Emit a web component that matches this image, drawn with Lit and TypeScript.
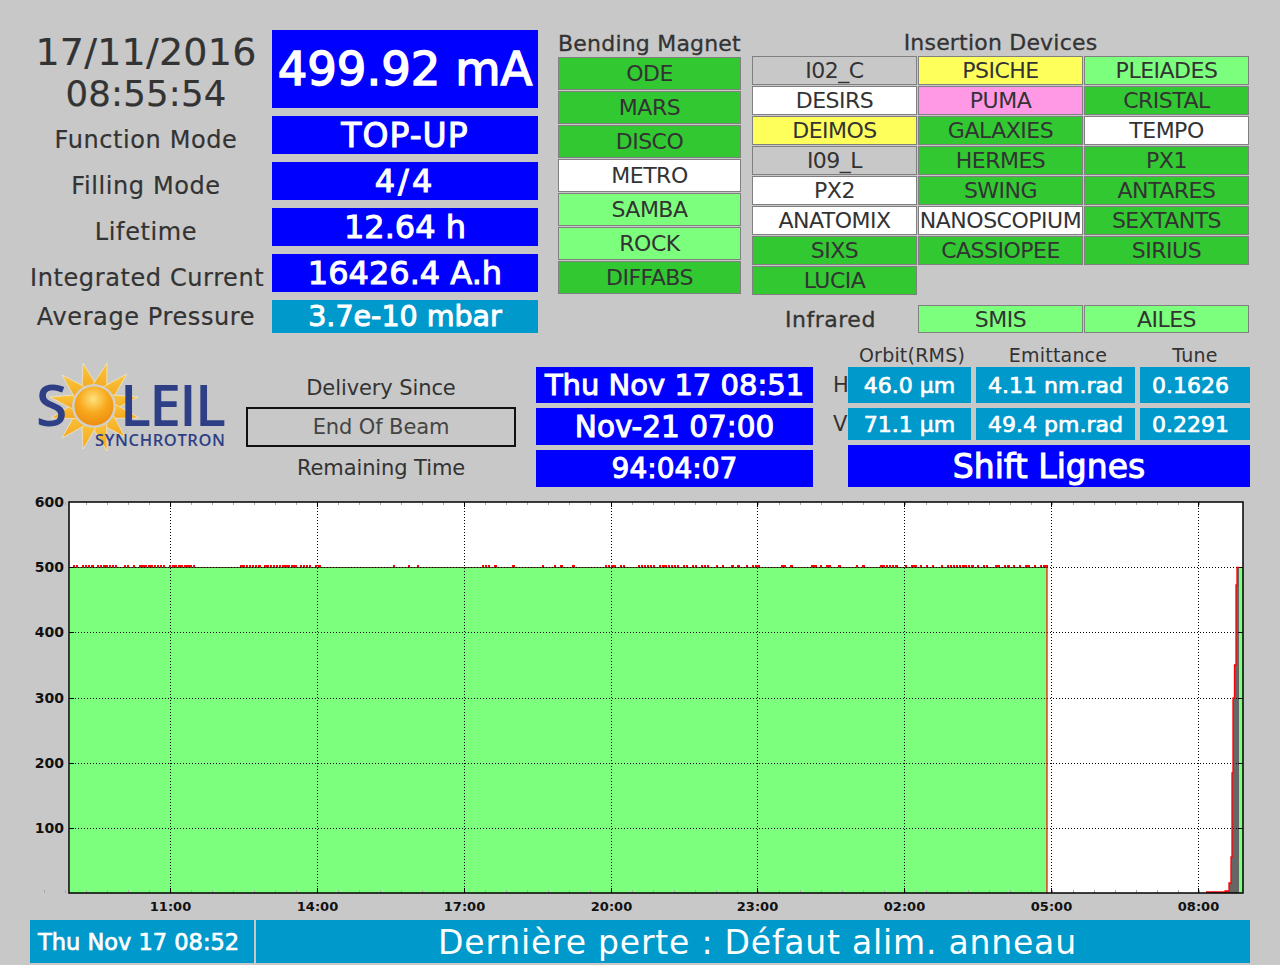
import { LitElement, css, html, svg } from "lit";
import { customElement } from "lit/decorators.js";

type Cell = [string, string];

const BENDING: Cell[] = [
  ["ODE", "on"],
  ["MARS", "on"],
  ["DISCO", "on"],
  ["METRO", "off"],
  ["SAMBA", "lite"],
  ["ROCK", "lite"],
  ["DIFFABS", "on"],
];

const INSERTION: Cell[] = [
  ["I02_C", "idle"],
  ["PSICHE", "warn"],
  ["PLEIADES", "lite"],
  ["DESIRS", "off"],
  ["PUMA", "pink"],
  ["CRISTAL", "on"],
  ["DEIMOS", "warn"],
  ["GALAXIES", "on"],
  ["TEMPO", "off"],
  ["I09_L", "idle"],
  ["HERMES", "on"],
  ["PX1", "on"],
  ["PX2", "off"],
  ["SWING", "on"],
  ["ANTARES", "on"],
  ["ANATOMIX", "off"],
  ["NANOSCOPIUM", "off"],
  ["SEXTANTS", "on"],
  ["SIXS", "on"],
  ["CASSIOPEE", "on"],
  ["SIRIUS", "on"],
  ["LUCIA", "on"],
];

// chart geometry, in page pixels minus the svg's top (487)
const TOP = 15;
const BOTTOM = 406;
const LEFT = 69;
const RIGHT = 1243;
const X_GRID: [number, string][] = [
  [170, "11:00"],
  [317, "14:00"],
  [464, "17:00"],
  [611, "20:00"],
  [757, "23:00"],
  [904, "02:00"],
  [1051, "05:00"],
  [1198, "08:00"],
];
const Y_GRID: [number, string][] = [
  [80, "500"],
  [145, "400"],
  [211, "300"],
  [276, "200"],
  [341, "100"],
];
const MINOR_X = Array.from({ length: 56 }, (_, i) => 44 + i * 21);

// red trace wobbling just above 500 mA: [from, to, density]
const NOISE: [number, number, number][] = [
  [70, 195, 0.75],
  [240, 320, 0.7],
  [390, 420, 0.2],
  [470, 600, 0.25],
  [605, 760, 0.65],
  [760, 900, 0.4],
  [905, 1047, 0.7],
];

function noisePath() {
  let d = "";
  let seed = 7;
  for (const [from, to, density] of NOISE) {
    for (let x = from; x < to; x += 3) {
      seed = (seed * 137 + 11) % 1009;
      if (seed / 1009 < density) d += `M${x} ${TOP + 64}h${seed % 3 === 0 ? 3 : 2}`;
    }
  }
  return d;
}

const RISE = "M1206 405H1225V404H1229V396H1231V370H1232V286H1233V211H1234.5V178H1236V98H1237V80.5H1239";

const TIPS = [
  [83, 363],
  [107, 363],
  [127, 374],
  [138, 397],
  [139, 418],
  [125, 437],
  [107, 451],
  [83, 449],
  [62, 438],
  [51, 418],
  [50, 397],
  [62, 375],
];

function rays() {
  const cx = 94;
  const cy = 406;
  return TIPS.map(([x, y]) => {
    const a = Math.atan2(y - cy, x - cx);
    const b1 = a - 0.4;
    const b2 = a + 0.4;
    const p1 = `${(cx + 20 * Math.cos(b1)).toFixed(1)},${(cy + 20 * Math.sin(b1)).toFixed(1)}`;
    const p2 = `${(cx + 20 * Math.cos(b2)).toFixed(1)},${(cy + 20 * Math.sin(b2)).toFixed(1)}`;
    return svg`<polygon points="${p1} ${x},${y} ${p2}" fill="url(#ray)" stroke="#f4ecd0" stroke-width="0.7" />`;
  });
}

@customElement("app-root")
export class AppRoot extends LitElement {
  static styles = css`
    :host {
      display: block;
      width: 1280px;
      height: 965px;
      box-sizing: border-box;
      padding-top: 30px;
      overflow: hidden;
      background: #c8c8c8;
      color: #333;
      font-family: "DejaVu Sans", "Liberation Sans", sans-serif;
    }

    .top {
      display: flex;
      padding-left: 30px;
      height: 303px;
    }

    .status {
      display: grid;
      grid-template-columns: 232px 266px;
      grid-template-rows: 78px 38px 38px 38px 38px 33px;
      gap: 8px 10px;
      width: 508px;
      margin-right: 20px;
    }

    .clock {
      font-size: 38px;
      line-height: 42px;
      letter-spacing: 0.2px;
      text-align: center;
      padding-top: 1px;
      white-space: nowrap;
      -webkit-text-stroke: 0.2px #333;
    }

    .clock .time {
      font-size: 35.5px;
    }

    .label {
      font-size: 24px;
      letter-spacing: 0.6px;
      line-height: 38px;
      text-align: center;
      white-space: nowrap;
      padding-top: 5px;
      -webkit-text-stroke: 0.2px #333;
    }

    .label.tight {
      padding-top: 0;
      line-height: 34px;
    }

    .value {
      display: flex;
      align-items: center;
      justify-content: center;
      color: #fff;
      background: #0000ff;
      white-space: nowrap;
      -webkit-text-stroke: 1px #fff;
    }

    .teal {
      background: #0099cc;
    }

    .current {
      font-size: 46.5px;
      -webkit-text-stroke: 1.5px #fff;
    }

    .big {
      font-size: 33px;
      letter-spacing: 1px;
    }

    .wide {
      font-size: 32px;
      letter-spacing: 3px;
    }

    .mid {
      font-size: 32px;
    }

    .press {
      font-size: 28.5px;
    }

    .bending {
      width: 183px;
      margin-right: 11px;
    }

    .title {
      font-size: 22px;
      letter-spacing: 0.2px;
      line-height: 27px;
      text-align: center;
      white-space: nowrap;
      -webkit-text-stroke: 0.3px #333;
    }

    .bending .cells {
      display: grid;
      grid-auto-rows: 33px;
      gap: 1px;
    }

    .insertion {
      width: 497px;
    }

    .insertion .title {
      line-height: 26px;
    }

    .insertion .cells {
      display: grid;
      grid-template-columns: repeat(3, 165px);
      grid-auto-rows: 29px;
      gap: 1px;
    }

    .infrared {
      display: grid;
      grid-template-columns: repeat(3, 165px);
      grid-auto-rows: 28px;
      gap: 1px;
      margin-top: 10px;
    }

    .infrared .name {
      font-size: 22px;
      letter-spacing: 0.5px;
      line-height: 30px;
      text-align: center;
      padding-right: 8px;
      -webkit-text-stroke: 0.3px #333;
    }

    .cell {
      box-sizing: border-box;
      display: flex;
      align-items: center;
      justify-content: center;
      border: 1px solid #808080;
      font-size: 22px;
      letter-spacing: -0.5px;
      white-space: nowrap;
      overflow: hidden;
    }

    .on {
      background: #32c832;
    }
    .lite {
      background: #7cff7c;
    }
    .off {
      background: #fff;
    }
    .idle {
      background: #c8c8c8;
    }
    .warn {
      background: #ffff5c;
    }
    .pink {
      background: #ff99e6;
    }

    .middle {
      display: flex;
      height: 142px;
      margin-top: 12px;
    }

    .logo {
      width: 246px;
      height: 142px;
      flex: none;
    }

    .delivery {
      display: grid;
      grid-template-rows: 40px 40px 40px;
      width: 270px;
      margin-top: 22px;
      margin-right: 20px;
      text-align: center;
      font-size: 21px;
      letter-spacing: -0.1px;
      line-height: 42px;
    }

    .beam {
      box-sizing: border-box;
      border: 2px solid #111;
      line-height: 37px;
      color: #444;
    }

    .times {
      display: grid;
      grid-template-columns: minmax(0, 1fr);
      grid-template-rows: 36px 37px 37px;
      gap: 5px;
      width: 277px;
      margin-top: 22px;
      margin-right: 20px;
    }

    .since {
      font-size: 29px;
    }

    .until {
      font-size: 29.5px;
    }

    .remain {
      font-size: 28px;
    }

    .beamline {
      display: grid;
      grid-template-columns: 10px 123px 159px 110px;
      grid-template-rows: 17px 36px 32px 42px;
      gap: 5px;
    }

    .head {
      font-size: 19px;
      letter-spacing: 0.2px;
      line-height: 20px;
      text-align: center;
      white-space: nowrap;
    }

    .head.shifted {
      padding-left: 5px;
    }

    .plane {
      font-size: 21px;
      align-self: center;
      white-space: nowrap;
    }

    .small {
      font-size: 22px;
      -webkit-text-stroke: 0.7px #fff;
    }

    .tune {
      padding-right: 9px;
    }

    .shift {
      grid-column: 2 / -1;
      font-size: 33px;
    }

    .chart {
      display: block;
      width: 1280px;
      height: 433px;
    }

    .chart text {
      font-family: "DejaVu Sans", sans-serif;
      font-weight: 700;
      fill: #111;
    }

    .footer {
      display: flex;
      gap: 2px;
      height: 43px;
      padding-left: 30px;
      color: #fff;
    }

    .footer div {
      display: flex;
      align-items: center;
      background: #0099cc;
      white-space: nowrap;
    }

    .stamp {
      box-sizing: border-box;
      width: 224px;
      padding-left: 8px;
      font-size: 22.5px;
      -webkit-text-stroke: 0.7px #fff;
    }

    .message {
      box-sizing: border-box;
      width: 994px;
      padding-left: 9px;
      padding-top: 2px;
      justify-content: center;
      font-size: 33px;
      letter-spacing: 0.8px;
    }
  `;

  private renderCells(cells: Cell[]) {
    return cells.map(([name, state]) => html`<div class="cell ${state}">${name}</div>`);
  }

  private renderLogo() {
    return html`<svg class="logo" viewBox="0 345 246 142" xmlns="http://www.w3.org/2000/svg">
      <defs>
        <linearGradient id="ray" x1="0" y1="0" x2="0" y2="1">
          <stop offset="0" stop-color="#fbc53c" />
          <stop offset="1" stop-color="#f3a81f" />
        </linearGradient>
        <radialGradient id="disc" cx="0.48" cy="0.32" r="0.72">
          <stop offset="0" stop-color="#fde27c" />
          <stop offset="0.5" stop-color="#f9a91d" />
          <stop offset="1" stop-color="#ea8a12" />
        </radialGradient>
      </defs>
      ${rays()}
      <circle cx="94" cy="406" r="22" fill="#d3cfc4" />
      <circle cx="94" cy="406" r="19.5" fill="url(#disc)" />
      <g fill="#2f3f86" font-family="'Open Sans', sans-serif" font-weight="600">
        <text x="36" y="426" font-size="57">S</text>
        <text x="120" y="426" font-size="57" textLength="106" lengthAdjust="spacing">LEIL</text>
        <text x="95" y="446" font-size="16.5" textLength="130" lengthAdjust="spacing">SYNCHROTRON</text>
      </g>
    </svg>`;
  }

  private renderChart() {
    return html`<svg class="chart" viewBox="0 0 1280 433" xmlns="http://www.w3.org/2000/svg">
      <rect x="${LEFT}" y="${TOP}" width="${RIGHT - LEFT}" height="${BOTTOM - TOP}" fill="#fff" />
      <rect x="70" y="80" width="977" height="${BOTTOM - 80}" fill="#7cff7c" />
      <path d="${RISE}V${BOTTOM}H1206Z" fill="#666" />
      <rect x="1239" y="80" width="4" height="${BOTTOM - 80}" fill="#7cff7c" />
      ${MINOR_X.map(
        (x) => svg`
          <path d="M${x + 0.5} ${TOP}v3M${x + 0.5} ${BOTTOM}v-3" stroke="#aaa" />`
      )}
      ${X_GRID.map(
        ([x, t]) => svg`
          <path d="M${x + 0.5} ${TOP}V${BOTTOM}" stroke="#000" stroke-dasharray="1 2" />
          <path d="M${x + 0.5} ${TOP}v5M${x + 0.5} ${BOTTOM}v-5" stroke="#000" />
          <text x="${x + 0.5}" y="424" font-size="13" text-anchor="middle">${t}</text>`
      )}
      ${Y_GRID.map(
        ([y, t]) => svg`
          <path d="M${LEFT} ${y + 0.5}H${RIGHT}" stroke="#000" stroke-dasharray="1 2" />
          <path d="M${LEFT} ${y + 0.5}h5M${RIGHT} ${y + 0.5}h-5" stroke="#000" />
          <text x="64" y="${y + 5}" font-size="14" text-anchor="end">${t}</text>`
      )}
      <text x="64" y="20" font-size="14" text-anchor="end">600</text>
      <path d="M70 80.5H1047" stroke="#300" stroke-width="0.7" fill="none" />
      <path d="${noisePath()}" stroke="#f00" stroke-width="2" fill="none" />
      <path d="M1047 80V${BOTTOM}" stroke="#f00" stroke-width="1.2" fill="none" />
      <path d="${RISE}" stroke="#f00" stroke-width="1.3" fill="none" />
      <rect
        x="${LEFT}"
        y="${TOP}"
        width="${RIGHT - LEFT}"
        height="${BOTTOM - TOP}"
        fill="none"
        stroke="#000"
        stroke-width="1.5"
      />
    </svg>`;
  }

  render() {
    return html`
      <div class="top">
        <div class="status">
          <div class="clock">
            <div>17/11/2016</div>
            <div class="time">08:55:54</div>
          </div>
          <div class="value current">499.92 mA</div>
          <div class="label">Function Mode</div>
          <div class="value big">TOP-UP</div>
          <div class="label">Filling Mode</div>
          <div class="value wide">4/4</div>
          <div class="label">Lifetime</div>
          <div class="value mid">12.64 h</div>
          <div class="label">Integrated Current</div>
          <div class="value mid">16426.4 A.h</div>
          <div class="label tight">Average Pressure</div>
          <div class="value teal press">3.7e-10 mbar</div>
        </div>
        <div class="bending">
          <div class="title">Bending Magnet</div>
          <div class="cells">${this.renderCells(BENDING)}</div>
        </div>
        <div class="insertion">
          <div class="title">Insertion Devices</div>
          <div class="cells">${this.renderCells(INSERTION)}</div>
          <div class="infrared">
            <div class="name">Infrared</div>
            <div class="cell lite">SMIS</div>
            <div class="cell lite">AILES</div>
          </div>
        </div>
      </div>
      <div class="middle">
        ${this.renderLogo()}
        <div class="delivery">
          <div>Delivery Since</div>
          <div class="beam">End Of Beam</div>
          <div>Remaining Time</div>
        </div>
        <div class="times">
          <div class="value since">Thu Nov 17 08:51</div>
          <div class="value until">Nov-21 07:00</div>
          <div class="value remain">94:04:07</div>
        </div>
        <div class="beamline">
          <div></div>
          <div class="head shifted">Orbit(RMS)</div>
          <div class="head shifted">Emittance</div>
          <div class="head">Tune</div>
          <div class="plane">H</div>
          <div class="value teal small">46.0 µm</div>
          <div class="value teal small">4.11 nm.rad</div>
          <div class="value teal small tune">0.1626</div>
          <div class="plane">V</div>
          <div class="value teal small">71.1 µm</div>
          <div class="value teal small">49.4 pm.rad</div>
          <div class="value teal small tune">0.2291</div>
          <div class="value shift">Shift Lignes</div>
        </div>
      </div>
      ${this.renderChart()}
      <div class="footer">
        <div class="stamp">Thu Nov 17 08:52</div>
        <div class="message">Dernière perte : Défaut alim. anneau</div>
      </div>
    `;
  }
}
